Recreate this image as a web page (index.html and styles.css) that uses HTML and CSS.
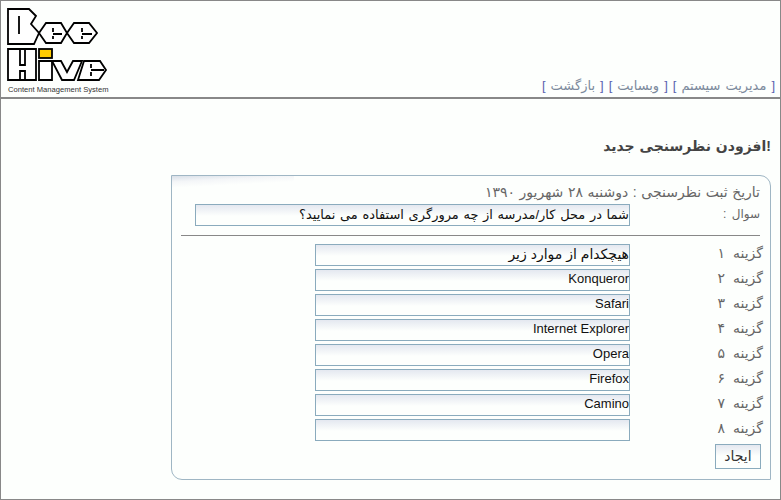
FILE: index.html
```html
<!DOCTYPE html>
<html lang="fa" dir="rtl">
<head>
<meta charset="utf-8">
<title>افزودن نظرسنجی جدید</title>
<link rel="stylesheet" href="styles.css">
</head>
<body>
<div class="page">
  <header class="header">
    <nav class="nav">[ <a href="#">مدیریت سیستم</a> ] [ <a href="#">وبسایت</a> ] [ <a href="#">بازگشت</a> ]</nav>
    <div class="logo" dir="ltr">
      <svg class="logo-art" width="101" height="74" viewBox="7 8 101 74" aria-hidden="true">
        <g fill="#fff" stroke="#000" stroke-width="1.8" stroke-linejoin="miter">
          <path d="M8 9H29L36 16L31 24L39 33L34 44H8Z"/>
          <path d="M39 33L46 23H61L67 33L61 43H46Z"/>
          <path d="M67 33L74 23H89L97 33L89 43H74Z"/>
          <path d="M8 49H36V80H8Z"/>
          <path d="M39 61H52V80H39Z"/>
          <path d="M52 61H61L67 72L73 61H82L74 80H62Z"/>
          <path d="M84 61H100L106 70L99 80H78Z"/>
        </g>
        <rect x="39" y="49" width="13" height="9" fill="#fc0" stroke="#000" stroke-width="1.8"/>
        <g stroke="#000" stroke-width="1.8" fill="none">
          <path d="M19 16V34"/>
          <path d="M20 49V65H25V49M20 80V71H25V80"/>
          <path d="M53 28V32M53 36V39M53 34H62"/>
          <path d="M82 28V32M82 36V39M82 34H92"/>
          <path d="M91 64V68M91 72V76M91 70H104"/>
        </g>
      </svg>
      <div class="logo-text">Content Management System</div>
    </div>
  </header>
  <main class="content">
    <h1 class="title">!افزودن نظرسنجی جدید</h1>
    <form class="panel">
      <p class="date">تاریخ ثبت نظرسنجی : دوشنبه ۲۸ شهریور ۱۳۹۰</p>
      <div class="row">
        <label class="label label-question">سوال :</label>
        <input class="field field-wide field-question" type="text" value="شما در محل کار/مدرسه از چه مرورگری استفاده می نمایید؟">
      </div>
      <hr class="rule">
      <div class="options">
        <div class="row row-option"><label class="label">گزینه ۱</label><input class="field field-fa" type="text" value="هیچکدام از موارد زیر"></div>
        <div class="row row-option"><label class="label">گزینه ۲</label><input class="field" type="text" value="Konqueror"></div>
        <div class="row row-option"><label class="label">گزینه ۳</label><input class="field" type="text" value="Safari"></div>
        <div class="row row-option"><label class="label">گزینه ۴</label><input class="field" type="text" value="Internet Explorer"></div>
        <div class="row row-option"><label class="label">گزینه ۵</label><input class="field" type="text" value="Opera"></div>
        <div class="row row-option"><label class="label">گزینه ۶</label><input class="field" type="text" value="Firefox"></div>
        <div class="row row-option"><label class="label">گزینه ۷</label><input class="field" type="text" value="Camino"></div>
        <div class="row row-option"><label class="label">گزینه ۸</label><input class="field" type="text" value=""></div>
      </div>
      <div class="actions"><button class="button" type="button">ایجاد</button></div>
    </form>
  </main>
</div>
</body>
</html>
```
FILE: styles.css
```css
* { box-sizing: border-box; }
html, body { margin: 0; padding: 0; }
body {
  background: #fff;
  color: #666;
  font-family: "Liberation Sans", "DejaVu Sans", sans-serif;
  font-size: 13px;
  overflow: hidden;
}
.page {
  width: 781px;
  height: 500px;
  border: 1px solid #888;
  background: #fdfffd;
}
.header {
  height: 98px;
  border-bottom: 2px solid #888;
  display: flex;
  justify-content: space-between;
  align-items: flex-end;
  padding: 0 5px 0 6px;
}
.nav {
  color: #5a62b0;
  font-size: 13px;
  line-height: 16px;
  padding-bottom: 3px;
  word-spacing: 1.4px;
}
.nav a { color: #7c8a9c; text-decoration: none; }
.logo { width: 110px; display: flex; flex-direction: column; align-items: flex-start; padding-bottom: 3px; }
.logo-art { display: block; margin-bottom: 3px; }
.logo-text { font-size: 7.6px; line-height: 9px; color: #333; white-space: nowrap; padding-left: 1px; }
.content { padding: 0 9px 0 0; }
.title {
  margin: 0;
  padding: 37px 0 0 0;
  height: 76px;
  font-size: 14px;
  line-height: 20px;
  font-weight: bold;
  color: #444;
  word-spacing: 1px;
}
.panel {
  width: 600px;
  height: 305px;
  padding: 7px 10px 0 9px;
  border: 1px solid #9fb6c4;
  border-radius: 0 11px 0 11px;
  background: linear-gradient(177deg, #d9e0e8 0, #f4f6f8 6px, transparent 12px) no-repeat left top / 122px 12px;
  background-color: #fdfffd;
}
.date { margin: 0; height: 21px; line-height: 18px; font-size: 14px; word-spacing: 0.7px; }
.row { display: flex; align-items: center; height: 22px; justify-content: flex-start; }
.row-option { height: 25px; }
.label { width: 133px; flex: none; font-size: 14px; word-spacing: 4px; padding-bottom: 4px; }
.label-question { width: 130px; font-size: 12px; word-spacing: 2px; padding-bottom: 2px; }
.field {
  width: 315px;
  height: 22px;
  padding: 0 0 2px 0;
  border: 1px solid #8aabbd;
  background: linear-gradient(#e4e8f0, #fdfffd 11px);
  color: #111;
  font: 13px "Liberation Sans", "DejaVu Sans", sans-serif;
  text-align: right;
  direction: rtl;
  border-radius: 0;
  outline: none;
}
.field-wide { width: 435px; flex: none; }
.field-question { word-spacing: 1px; }
.field-fa { font-size: 14px; }
.options { margin-right: -3px; }
.rule { margin: 9px 0 6px 0; height: 1px; border: 0; background: #888; }
.actions { margin-top: 2px; display: flex; justify-content: flex-start; }
.button {
  width: 46px;
  height: 25px;
  padding: 0 0 2px 0;
  margin-right: -1px;
  border: 1px solid #8aabbd;
  background: linear-gradient(#e4e8f0, #fdfffd 11px);
  color: #333;
  font: 14px "Liberation Sans", "DejaVu Sans", sans-serif;
  letter-spacing: 1.5px;
}
```
